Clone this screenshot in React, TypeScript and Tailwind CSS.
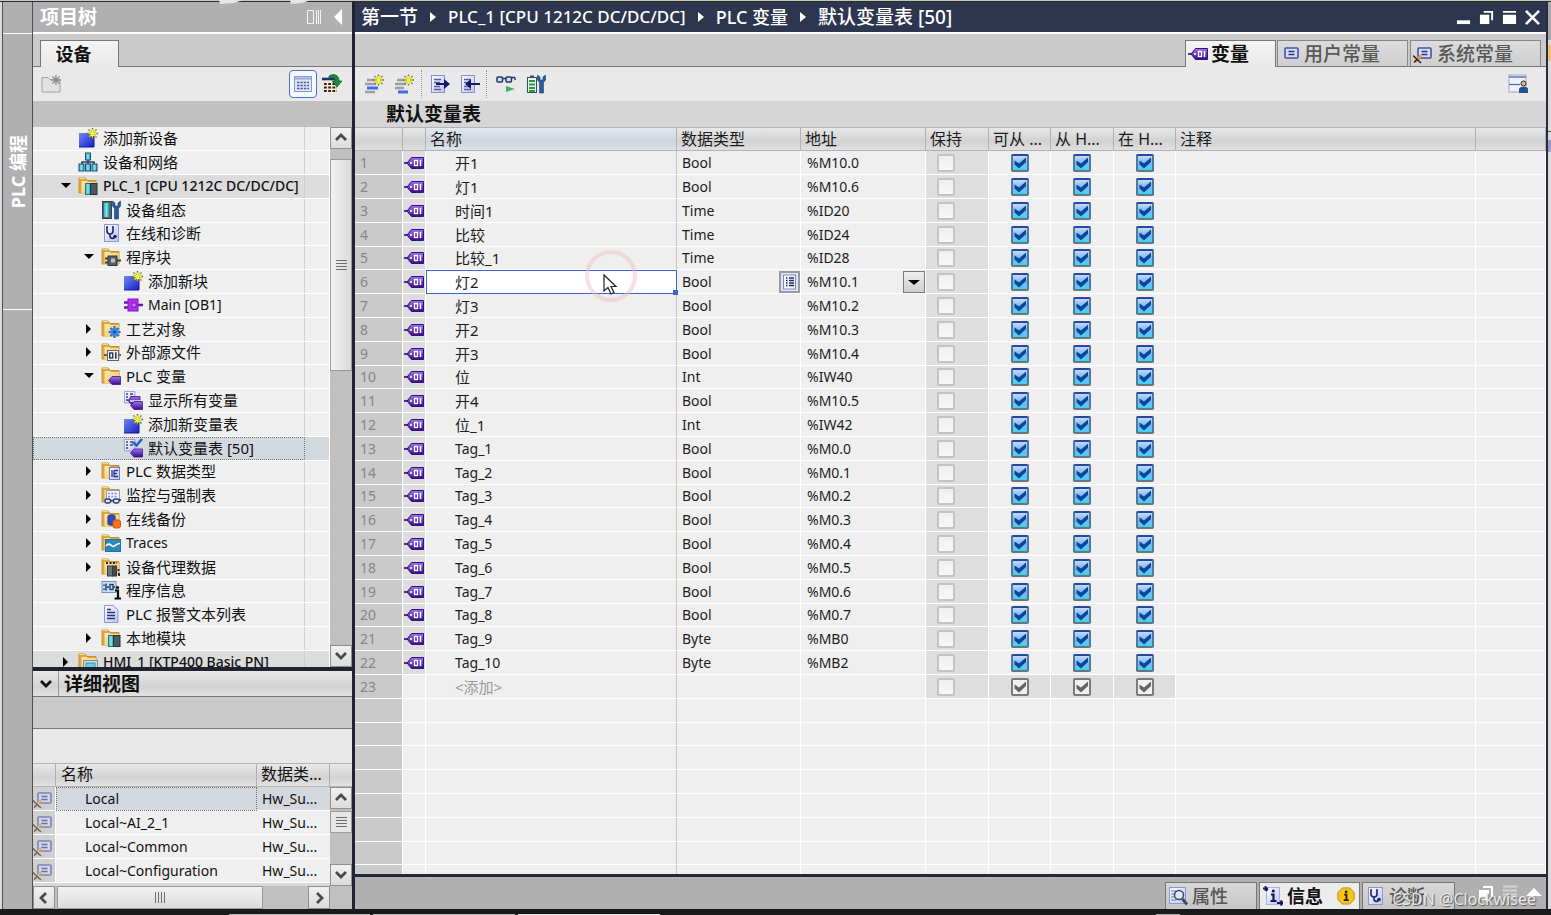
import { useState } from 'react';
import type { ReactNode } from 'react';
import { clsx } from 'clsx';

type IconName =
  | 'addNew'
  | 'network'
  | 'plcFolder'
  | 'deviceConfig'
  | 'diagnose'
  | 'blocks'
  | 'mainBlock'
  | 'techFolder'
  | 'sourceFolder'
  | 'tagFolder'
  | 'allTags'
  | 'tagTable'
  | 'typeFolder'
  | 'watchFolder'
  | 'backupFolder'
  | 'traceFolder'
  | 'proxyFolder'
  | 'programInfo'
  | 'textList'
  | 'localFolder'
  | 'hmiFolder';

interface TreeItem {
  label: string;
  icon: IconName;
  level: 0 | 1 | 2;
  arrow?: 'open' | 'closed';
  device?: boolean;
}

const TREE: TreeItem[] = [
  { label: '添加新设备', icon: 'addNew', level: 0 },
  { label: '设备和网络', icon: 'network', level: 0 },
  { label: 'PLC_1 [CPU 1212C DC/DC/DC]', icon: 'plcFolder', level: 0, arrow: 'open', device: true },
  { label: '设备组态', icon: 'deviceConfig', level: 1 },
  { label: '在线和诊断', icon: 'diagnose', level: 1 },
  { label: '程序块', icon: 'blocks', level: 1, arrow: 'open' },
  { label: '添加新块', icon: 'addNew', level: 2 },
  { label: 'Main [OB1]', icon: 'mainBlock', level: 2 },
  { label: '工艺对象', icon: 'techFolder', level: 1, arrow: 'closed' },
  { label: '外部源文件', icon: 'sourceFolder', level: 1, arrow: 'closed' },
  { label: 'PLC 变量', icon: 'tagFolder', level: 1, arrow: 'open' },
  { label: '显示所有变量', icon: 'allTags', level: 2 },
  { label: '添加新变量表', icon: 'addNew', level: 2 },
  { label: '默认变量表 [50]', icon: 'tagTable', level: 2 },
  { label: 'PLC 数据类型', icon: 'typeFolder', level: 1, arrow: 'closed' },
  { label: '监控与强制表', icon: 'watchFolder', level: 1, arrow: 'closed' },
  { label: '在线备份', icon: 'backupFolder', level: 1, arrow: 'closed' },
  { label: 'Traces', icon: 'traceFolder', level: 1, arrow: 'closed' },
  { label: '设备代理数据', icon: 'proxyFolder', level: 1, arrow: 'closed' },
  { label: '程序信息', icon: 'programInfo', level: 1 },
  { label: 'PLC 报警文本列表', icon: 'textList', level: 1 },
  { label: '本地模块', icon: 'localFolder', level: 1, arrow: 'closed' },
  { label: 'HMI_1 [KTP400 Basic PN]', icon: 'hmiFolder', level: 0, arrow: 'closed', device: true },
];

const SELECTED_TREE_ITEM = 13;
const ACTIVE_TAG = 5;
const EMPTY_ROWS = 8;

const TAGS: [name: string, type: string, address: string][] = [
  ['开1', 'Bool', '%M10.0'],
  ['灯1', 'Bool', '%M10.6'],
  ['时间1', 'Time', '%ID20'],
  ['比较', 'Time', '%ID24'],
  ['比较_1', 'Time', '%ID28'],
  ['灯2', 'Bool', '%M10.1'],
  ['灯3', 'Bool', '%M10.2'],
  ['开2', 'Bool', '%M10.3'],
  ['开3', 'Bool', '%M10.4'],
  ['位', 'Int', '%IW40'],
  ['开4', 'Bool', '%M10.5'],
  ['位_1', 'Int', '%IW42'],
  ['Tag_1', 'Bool', '%M0.0'],
  ['Tag_2', 'Bool', '%M0.1'],
  ['Tag_3', 'Bool', '%M0.2'],
  ['Tag_4', 'Bool', '%M0.3'],
  ['Tag_5', 'Bool', '%M0.4'],
  ['Tag_6', 'Bool', '%M0.5'],
  ['Tag_7', 'Bool', '%M0.6'],
  ['Tag_8', 'Bool', '%M0.7'],
  ['Tag_9', 'Byte', '%MB0'],
  ['Tag_10', 'Byte', '%MB2'],
];

const ACCESS_COLUMNS = ['可从 ...', '从 H...', '在 H...'];

const DETAILS = ['Local', 'Local~AI_2_1', 'Local~Common', 'Local~Configuration'];

const HEADER_FILL = 'bg-linear-to-b from-[#e9e9e9] via-[#d2d2d2] via-60% to-[#e2e2e2]';

// Chinese labels are set one pixel larger than plain Latin ones.
function textSize(text: string) {
  return /[\u4e00-\u9fff]/.test(text) ? 'text-[15px]' : 'text-sm';
}

function Svg({ children, className = 'size-5', box = '0 0 20 20' }: { children: ReactNode; className?: string; box?: string }) {
  return (
    <svg viewBox={box} className={clsx('block shrink-0', className)} fill="none" aria-hidden="true">
      {children}
    </svg>
  );
}

function SharedDefs() {
  return (
    <svg className="absolute size-0" aria-hidden="true">
      <defs>
        <linearGradient id="purple" x1="0" y1="0" x2="0" y2="1">
          <stop offset="0" stopColor="#9a7be6" />
          <stop offset="0.5" stopColor="#6a3cc4" />
          <stop offset="1" stopColor="#35107f" />
        </linearGradient>
        <linearGradient id="blue" x1="0" y1="0" x2="1" y2="1">
          <stop offset="0" stopColor="#6f86f6" />
          <stop offset="1" stopColor="#1620c0" />
        </linearGradient>
        <linearGradient id="folder" x1="0" y1="0" x2="1" y2="1">
          <stop offset="0" stopColor="#fdeab2" />
          <stop offset="1" stopColor="#f2c25c" />
        </linearGradient>
        <linearGradient id="paper" x1="0" y1="0" x2="1" y2="1">
          <stop offset="0" stopColor="#fdfdff" />
          <stop offset="1" stopColor="#bcc4ee" />
        </linearGradient>
        <linearGradient id="cyan" x1="0" y1="0" x2="1" y2="0">
          <stop offset="0" stopColor="#2fb4cc" />
          <stop offset="0.5" stopColor="#7fe6f0" />
          <stop offset="1" stopColor="#2799b4" />
        </linearGradient>
      </defs>
    </svg>
  );
}

function Spark({ x, y }: { x: number; y: number }) {
  return (
    <g transform={`translate(${x} ${y})`}>
      <path d="M0-5.500V5.500M-5.500 0H5.500M-4-4 4 4M4-4-4 4" stroke="#6d7a24" strokeWidth="1.400" />
      <path d="M0-4V4M-4 0H4M-3-3 3 3M3-3-3 3" stroke="#f4f53c" strokeWidth="1.200" />
    </g>
  );
}

function FolderShape() {
  return (
    <g>
      <path d="M1 17V2H7L9 4.500H18V17Z" fill="#dfa640" stroke="#c39232" />
      <path d="M3.500 17.500V5H8.500L10 6H18V17.500Z" fill="url(#folder)" />
      <path d="M1.500 2.500H7" stroke="#f7d98c" />
    </g>
  );
}

function Wrench({ x = 12 }: { x?: number }) {
  return (
    <path
      transform={`translate(${x} 1)`}
      d="M0 0V5L2 7.500V18H6V7.500L8 5V0L5.500 2V5H2.500V2Z"
      fill="#2a5b9d"
      stroke="#173e78"
      strokeWidth="0.6"
    />
  );
}

function SmallTag({ x, y }: { x: number; y: number }) {
  return (
    <path
      transform={`translate(${x} ${y})`}
      d="M0 4 3.500 0H12V8H3.500Z"
      fill="url(#purple)"
      stroke="#3a1684"
      strokeWidth="0.8"
    />
  );
}

function Stethoscope() {
  return (
    <g>
      <rect x="3.500" y="1.500" width="14" height="17" fill="url(#paper)" stroke="#8b97d4" />
      <path d="M7 4H6V8C6 12 12 12 12 8V4H11M9 11V13C9 16 13 16 13.500 14" stroke="#1b2668" strokeWidth="1.600" />
      <circle cx="14" cy="13.500" r="1.800" fill="#1b2668" />
    </g>
  );
}

function Sheet() {
  return (
    <g>
      <path d="M1.500 1.500H12V13H1.500Z" fill="url(#paper)" stroke="#9aa5d8" />
      <path d="M3 4H5M7 4H10M3 7H5M7 7H10M3 10H5" stroke="#38427e" strokeWidth="1.400" />
    </g>
  );
}

function TreeIcon({ name }: { name: IconName }) {
  switch (name) {
    case 'addNew':
      return (
        <Svg>
          <rect x="1" y="5" width="15" height="14" fill="url(#blue)" />
          <path d="M1 19H16V5" stroke="#1218a0" />
          <Spark x={14.5} y={5.5} />
        </Svg>
      );
    case 'network':
      return (
        <Svg>
          <path d="M10 7V10M4 13V10H16V13M10 10V13" stroke="#1f3f66" strokeWidth="1.500" />
          <rect x="7.500" y="1" width="5" height="7" fill="url(#cyan)" stroke="#1f4a70" />
          <rect x="1" y="12" width="5" height="7" fill="url(#cyan)" stroke="#1f4a70" />
          <rect x="7.500" y="12" width="5" height="7" fill="url(#cyan)" stroke="#1f4a70" />
          <rect x="14" y="12" width="5" height="7" fill="url(#cyan)" stroke="#1f4a70" />
        </Svg>
      );
    case 'plcFolder':
    case 'localFolder':
      return (
        <Svg>
          <FolderShape />
          <rect x="7.500" y="7.500" width="5" height="11" fill="url(#cyan)" stroke="#2c6f86" />
          <rect x="12.500" y="7.500" width="6.500" height="11" fill="#4b5960" stroke="#2b343b" />
        </Svg>
      );
    case 'deviceConfig':
      return (
        <Svg>
          <rect x="1.500" y="1.500" width="9" height="17" fill="#56646c" stroke="#36444c" />
          <rect x="3" y="3" width="5" height="14" fill="url(#cyan)" />
          <Wrench x={11.5} />
        </Svg>
      );
    case 'diagnose':
      return (
        <Svg>
          <Stethoscope />
        </Svg>
      );
    case 'blocks':
      return (
        <Svg>
          <FolderShape />
          <path d="M4 11.500H7M4 15.500H7M16 13.500H20" stroke="#3d464c" strokeWidth="2" />
          <rect x="7" y="9" width="9" height="9.500" fill="#545f66" stroke="#2f383d" />
          <rect x="10" y="11.500" width="4" height="4" fill="#b8c0c4" />
        </Svg>
      );
    case 'mainBlock':
      return (
        <Svg>
          <path d="M1 7.500H6M1 12.500H6M14 10H20" stroke="#6a1aa8" strokeWidth="2.400" />
          <rect x="5" y="4" width="10" height="12" fill="#b32ff0" stroke="#7a18b8" />
          <rect x="9" y="8" width="4" height="4" fill="#d77cff" stroke="#7a18b8" />
        </Svg>
      );
    case 'techFolder':
      return (
        <Svg>
          <FolderShape />
          <path d="M13.500 7V19M7.500 13H19.500M9.500 9 17.500 17M17.500 9 9.500 17" stroke="#2a6bd0" strokeWidth="2.200" />
          <circle cx="13.500" cy="13" r="4" fill="#3f86e6" />
          <circle cx="13.500" cy="13" r="1.500" fill="#17479c" />
        </Svg>
      );
    case 'sourceFolder':
      return (
        <Svg>
          <FolderShape />
          <path d="M3 13H20" stroke="#59636c" strokeWidth="2" />
          <rect x="6.500" y="8.500" width="11" height="10" fill="#eef1fb" stroke="#5b6570" />
          <rect x="8.700" y="11" width="3" height="5" stroke="#20284a" strokeWidth="1.300" />
          <path d="M14.800 10.300V16.700" stroke="#20284a" strokeWidth="1.500" />
        </Svg>
      );
    case 'tagFolder':
      return (
        <Svg>
          <FolderShape />
          <SmallTag x={7.5} y={10.5} />
        </Svg>
      );
    case 'allTags':
      return (
        <Svg>
          <Sheet />
          <SmallTag x={5} y={6.5} />
          <path d="M7 11H19" stroke="#f2eefb" strokeWidth="1.500" />
          <SmallTag x={7.5} y={11.5} />
        </Svg>
      );
    case 'tagTable':
      return (
        <Svg>
          <Sheet />
          <path d="M10 4 13.500 7.500 19 1" stroke="#2a5cc4" strokeWidth="2.500" />
          <SmallTag x={7.5} y={11} />
        </Svg>
      );
    case 'typeFolder':
      return (
        <Svg>
          <FolderShape />
          <rect x="8.500" y="6.500" width="10" height="12" fill="url(#paper)" stroke="#6c7bc4" />
          <path d="M11 9V16M13 9.500H17M13 9.500V15.500H17M13 12.500H16" stroke="#26358c" strokeWidth="1.300" />
        </Svg>
      );
    case 'watchFolder':
      return (
        <Svg>
          <FolderShape />
          <rect x="5.500" y="5.500" width="13" height="10" fill="#f3f5ff" stroke="#8e9ad2" />
          <path d="M7 8.500H17M7 11.500H17" stroke="#8490c8" strokeWidth="1.500" strokeDasharray="2 1.300" />
          <rect x="4" y="14" width="5.500" height="4" rx="1.500" fill="#dfe6ff" stroke="#27357f" strokeWidth="1.300" />
          <rect x="12.500" y="14" width="5.500" height="4" rx="1.500" fill="#dfe6ff" stroke="#27357f" strokeWidth="1.300" />
          <path d="M9.500 15.500H12.500M18 15H20" stroke="#27357f" strokeWidth="1.300" />
        </Svg>
      );
    case 'backupFolder':
      return (
        <Svg>
          <FolderShape />
          <path d="M7 7C7 5.500 14 5.500 14 7V15C14 16.500 7 16.500 7 15Z" fill="#2b49c6" stroke="#1b2f93" />
          <rect x="12" y="11" width="7.500" height="8" rx="2" fill="#f4731f" stroke="#d4560c" />
        </Svg>
      );
    case 'traceFolder':
      return (
        <Svg>
          <FolderShape />
          <rect x="4.500" y="6.500" width="15" height="12" fill="#2f87b8" stroke="#22709d" />
          <path d="M5 13C7 10 9 11 11 13S15 10 19 10.500" stroke="#f4fbff" strokeWidth="1.600" />
        </Svg>
      );
    case 'proxyFolder':
      return (
        <Svg>
          <FolderShape />
          <path d="M5 6H16" stroke="#1f2327" strokeWidth="2" strokeDasharray="2 1.500" />
          <rect x="6.500" y="9" width="5" height="10" fill="#6c757c" stroke="#33393d" />
          <rect x="11.500" y="9" width="4" height="10" fill="#434b51" stroke="#33393d" />
          <path d="M17.500 12V14M18 16V19" stroke="#222" strokeWidth="1.800" />
        </Svg>
      );
    case 'programInfo':
      return (
        <Svg>
          <rect x="1" y="1.500" width="14" height="11" fill="#c4dcf2" stroke="#6b96bf" />
          <path d="M3 4.500V6M3 8.500V10M6 7H8M12 7H14M5 3.500V10.500" stroke="#173a63" strokeWidth="1.400" />
          <rect x="9" y="4.500" width="3" height="5" stroke="#173a63" strokeWidth="1.300" />
          <path d="M14 10.500H17V18.500M13.500 18.500H20" stroke="#0b0b0b" strokeWidth="2.200" />
          <circle cx="16.500" cy="7.500" r="1.600" fill="#0b0b0b" />
        </Svg>
      );
    case 'textList':
      return (
        <Svg>
          <path d="M3.500 1.500H12L17 6V18.500H3.500Z" fill="url(#paper)" stroke="#8c98d0" />
          <path d="M6 5.500H10M6 8.500H14M6 11.500H14M6 14.500H14" stroke="#2a3678" strokeWidth="1.500" />
        </Svg>
      );
    case 'hmiFolder':
      return (
        <Svg>
          <FolderShape />
          <rect x="5.500" y="8.500" width="14" height="11" fill="#d2d8db" stroke="#7f8a90" />
          <rect x="8" y="11" width="9" height="7" fill="#5fcfe4" stroke="#3795ac" />
        </Svg>
      );
  }
}

function TagIcon() {
  return (
    <Svg box="0 0 20 14" className="h-[14px] w-5">
      <path d="M0 7H5" stroke="#3a2a6a" strokeWidth="1.800" />
      <path d="M3 7 7.500 1.500H19.500V12.500H7.500Z" fill="url(#purple)" stroke="#34107c" />
      <rect x="10.500" y="4.500" width="3" height="5" stroke="#fff" strokeWidth="1.300" />
      <path d="M16.500 4V10" stroke="#fff" strokeWidth="1.500" />
      <circle cx="7" cy="7" r="1.200" fill="#e6dcff" />
    </Svg>
  );
}

function ConstantIcon({ faded = false, pen = false }: { faded?: boolean; pen?: boolean }) {
  return (
    <Svg className={clsx('size-5', faded && 'opacity-60')}>
      <rect x="5" y="4" width="13" height="10" rx="1" fill="#d5dcf8" stroke="#4454a4" strokeWidth="1.600" />
      <path d="M8.500 7.500H14.500M8.500 10.500H14.500" stroke="#28347c" strokeWidth="1.400" />
      {pen && (
        <>
          <path d="M2 18 8 11.500" stroke="#e49a2c" strokeWidth="3" />
          <path d="M0 11.500 8 19M1 18.500 3.500 16" stroke="#1c1c1c" strokeWidth="1.300" />
        </>
      )}
    </Svg>
  );
}

function InsertRowIcon({ below = false }: { below?: boolean }) {
  return (
    <Svg>
      <path d={below ? 'M3 6H11M1 10H12M1 14H10' : 'M3 6H11M1 10H12M1 18H11'} stroke="#9c9fa3" strokeWidth="2.600" />
      <path d={below ? 'M4 18H14' : 'M3 14H14'} stroke="#3f6fe4" strokeWidth="3" />
      <Spark x={14.5} y={6} />
    </Svg>
  );
}

function TransferIcon({ into = false }: { into?: boolean }) {
  return (
    <Svg>
      <rect x="1.500" y="1.500" width="13" height="17" fill="url(#paper)" stroke="#8390cc" />
      <path d="M4 5.500H11M4 8.500H10M4 12.500H10M4 15.500H11" stroke="#5361a4" strokeWidth="1.300" />
      <path
        d={into ? 'M20 9H11V5L5 10 11 15V11H20Z' : 'M6 9H14V5L20 10 14 15V11H6Z'}
        fill="#15186a"
      />
    </Svg>
  );
}

function ScrollButton({ dir, label, className }: { dir: 'up' | 'down' | 'left' | 'right'; label: string; className?: string }) {
  const paths = { up: 'M3 10 8 5 13 10', down: 'M3 5 8 10 13 5', left: 'M10 3 5 8 10 13', right: 'M6 3 11 8 6 13' };
  return (
    <button
      type="button"
      aria-label={label}
      className={clsx(
        'grid shrink-0 place-items-center border border-[#8f8f8f] bg-linear-to-b from-[#f1f1f1] to-[#dcdcdc]',
        className ?? 'h-[22px] w-full',
      )}
    >
      <Svg box="0 0 16 16" className="size-4">
        <path d={paths[dir]} stroke="#4a4a4a" strokeWidth="2.800" />
      </Svg>
    </button>
  );
}

function Grip() {
  return (
    <span className="flex h-[10px] w-[11px] flex-col justify-between">
      {[0, 1, 2, 3].map((line) => (
        <span key={line} className="h-px bg-[#6d6d6d]" />
      ))}
    </span>
  );
}

function CheckBox({ label, state }: { label: string; state: 'on' | 'off' | 'preset' }) {
  const [checked, setChecked] = useState(state !== 'off');
  return (
    <label className="inline-grid size-[18px] align-middle">
      <input
        type="checkbox"
        aria-label={label}
        checked={checked}
        disabled={state !== 'on'}
        onChange={(e) => setChecked(e.target.checked)}
        className={clsx(
          'col-start-1 row-start-1 size-[18px] appearance-none rounded-[2px] border-2',
          state === 'on' && 'border-x-[#4f7a9c] border-t-[#25479c] border-b-[#68777c] bg-linear-to-b from-[#c3dafc] via-[#7cb8f4] to-[#36d3f3]',
          state === 'off' && 'border-[#c3c3c3] bg-linear-to-b from-[#efefef] to-[#f8f8f8]',
          state === 'preset' && 'border-[#7b7b7b] bg-[#f0f0f0]',
        )}
      />
      {checked && (
        <Svg box="0 0 18 18" className="pointer-events-none col-start-1 row-start-1 size-[18px]">
          <path d="M3.500 6.500 8 9.500 15 3.500V8L8 14.500 3.500 10.500Z" fill={state === 'on' ? '#0c469c' : '#646464'} />
        </Svg>
      )}
    </label>
  );
}

function SideStrip() {
  return (
    <div className="flex w-[31px] shrink-0 flex-col border-x border-[#4c4f55] bg-[#b0b0b0]">
      <div className="h-8 border-b border-white" />
      <div className="flex h-[276px] items-center justify-center border-b border-white">
        <span className="rotate-180 text-lg leading-6 font-bold text-white [text-orientation:sideways] [writing-mode:vertical-rl]">
          PLC 编程
        </span>
      </div>
    </div>
  );
}

function ProjectTree() {
  const [selected, setSelected] = useState(SELECTED_TREE_ITEM);
  return (
    <div className="flex min-h-0 flex-1">
      <ul role="tree" aria-label="项目树" className="min-w-0 flex-1 overflow-hidden">
        {TREE.map((item, i) => (
          <li
            key={item.label}
            role="treeitem"
            aria-selected={selected === i}
            onClick={() => setSelected(i)}
            className={clsx(
              'flex h-6 border-b border-white nth-[5n]:h-[23px]',
              selected === i ? 'bg-[#d3d8de]' : item.device ? 'bg-[#dcdcdc]' : 'bg-[#efefef]',
            )}
          >
            <div
              className={clsx(
                'flex min-w-0 flex-1 items-center border-r border-[#d0d0d0] pb-0.5',
                selected === i && 'outline outline-1 -outline-offset-1 outline-dotted outline-[#777]',
                item.level === 0 && 'pl-[27px]',
                item.level === 1 && 'pl-[50px]',
                item.level === 2 && 'pl-[72px]',
              )}
            >
              <span className="flex w-[18px] shrink-0">
                {item.arrow && (
                  <button type="button" aria-label={item.arrow === 'open' ? '折叠' : '展开'}>
                    <Svg box="0 0 12 12" className="size-3">
                      <path d={item.arrow === 'open' ? 'M1 3H11L6 8Z' : 'M3 1V11L8 6Z'} fill="#000" />
                    </Svg>
                  </button>
                )}
              </span>
              <TreeIcon name={item.icon} />
              <span
                className={clsx(
                  'ml-[5px] leading-5 whitespace-nowrap',
                  textSize(item.label),
                  item.device ? 'font-medium' : 'font-normal',
                )}
              >
                {item.label}
              </span>
            </div>
            <div className="w-6" />
          </li>
        ))}
      </ul>
      <div className="flex w-[23px] flex-col border-l border-white bg-[#c0c0c0]">
        <ScrollButton dir="up" label="向上滚动" />
        <div className="mt-[10px] grid h-[212px] place-items-center border border-[#9a9a9a] bg-linear-to-r from-[#f2f2f2] to-[#dadada]">
          <Grip />
        </div>
        <ScrollButton dir="down" label="向下滚动" className="mt-auto h-[22px] w-full" />
      </div>
    </div>
  );
}

function DetailView() {
  return (
    <section className="flex h-[238px] shrink-0 flex-col">
      <div className={clsx('flex h-[26px] shrink-0 items-center border-b border-[#777]', HEADER_FILL)}>
        <button type="button" aria-label="折叠详细视图" className="grid h-full w-[26px] place-items-center border-r border-[#999]">
          <Svg box="0 0 16 16" className="size-4">
            <path d="M3 5 8 10 13 5" stroke="#111" strokeWidth="2.800" />
          </Svg>
        </button>
        <h2 className="ml-[5px] text-[19px] leading-6 font-bold">详细视图</h2>
      </div>
      <div className="h-8 shrink-0 border-b border-[#777] bg-[#cacaca]" />
      <div className="h-[34px] shrink-0 bg-[#e9e9e9]" />
      <div className={clsx('flex h-6 shrink-0 border-y border-[#b4b4b4] text-base leading-5', HEADER_FILL)}>
        <span className="w-[23px] border-r border-[#b0b0b0]" />
        <span className="flex-1 border-r border-[#b0b0b0] pl-[5px]">名称</span>
        <span className="w-[73px] border-r border-[#b0b0b0] pl-1 whitespace-nowrap">数据类...</span>
        <span className="w-[22px]" />
      </div>
      <div className="flex min-h-0 flex-1">
        <div className="min-w-0 flex-1 overflow-hidden">
          <table className="w-full table-fixed border-separate border-spacing-0 text-sm">
            <colgroup>
              <col className="w-[23px]" />
              <col />
              <col className="w-[73px]" />
            </colgroup>
            <tbody>
              {DETAILS.map((name, i) => (
                <tr key={name} className={clsx('h-6', i === 0 ? 'bg-[#d3d8de]' : 'bg-[#efefef]')}>
                  <td className="border-r border-b border-white bg-[#cfcfcf] p-0">
                    <ConstantIcon faded pen />
                  </td>
                  <td
                    className={clsx(
                      'border-b border-white p-0 pl-[29px] leading-5',
                      i === 0 && 'outline outline-1 -outline-offset-1 outline-dotted outline-[#777]',
                    )}
                  >
                    {name}
                  </td>
                  <td className="border-b border-white p-0 pl-[5px] leading-5">Hw_Su...</td>
                </tr>
              ))}
            </tbody>
          </table>
        </div>
        <div className="flex w-[22px] flex-col bg-[#c0c0c0]">
          <ScrollButton dir="up" label="向上滚动" />
          <div className="mt-0.5 grid h-[22px] place-items-center border border-[#9a9a9a] bg-[#e6e6e6]">
            <Grip />
          </div>
          <ScrollButton dir="down" label="向下滚动" className="mt-auto h-[22px] w-full" />
        </div>
      </div>
      <div className="flex h-[23px] shrink-0 bg-[#c0c0c0]">
        <ScrollButton dir="left" label="向左滚动" className="h-full w-[22px]" />
        <div className="ml-0.5 grid w-[206px] place-items-center border border-[#9a9a9a] bg-linear-to-b from-[#f2f2f2] to-[#dcdcdc]">
          <span className="flex h-[11px] w-[10px] justify-between">
            {[0, 1, 2, 3].map((line) => (
              <span key={line} className="w-px bg-[#6d6d6d]" />
            ))}
          </span>
        </div>
        <ScrollButton dir="right" label="向右滚动" className="mr-[22px] ml-auto h-full w-[22px]" />
      </div>
    </section>
  );
}

function LeftPanel() {
  return (
    <aside className="flex w-[319px] shrink-0 flex-col">
      <header className="flex h-[30px] shrink-0 items-center bg-[#b0b0b0] pr-[9px] pl-[7px]">
        <h1 className="text-[19px] leading-6 font-bold text-white">项目树</h1>
        <button type="button" aria-label="列" className="ml-auto">
          <Svg box="0 0 14 14" className="size-[14px]">
            <path d="M0.500 0.500H6.500V13.500H0.500ZM9.500 0V14M11.500 0V14M13.500 0V14" stroke="#f4f4f4" />
          </Svg>
        </button>
        <button type="button" aria-label="折叠" className="ml-3">
          <Svg box="0 0 10 16" className="h-4 w-[10px]">
            <path d="M9 0V16L1 8Z" fill="#fff" />
          </Svg>
        </button>
      </header>
      <div className="flex h-[35px] shrink-0 items-end border-t-2 border-white bg-[#cacaca]">
        <span className="h-px w-[7px] bg-[#777]" />
        <button
          type="button"
          className="h-[27px] w-[79px] border border-b-0 border-[#777] bg-linear-to-b from-[#f4f4f4] to-[#e9e9e9] pr-3 text-lg leading-6 font-bold"
        >
          设备
        </button>
        <span className="h-px flex-1 bg-[#777]" />
      </div>
      <div className="flex h-[34px] shrink-0 items-center bg-[#e9e9e9] pr-[10px] pl-2">
        <button type="button" aria-label="新建组" disabled>
          <Svg>
            <path d="M1 18V3.500H7L9 5.500H19V18Z" fill="#e2e2e2" stroke="#a0a0a0" />
            <path d="M15 1V11M10 6H20M11.500 2.500 18.500 9.500M18.500 2.500 11.500 9.500" stroke="#8d8d8d" strokeWidth="1.300" />
          </Svg>
        </button>
        <button
          type="button"
          aria-label="显示列表"
          className="ml-auto grid size-7 place-items-center rounded-sm border border-[#4b73c8] bg-[#f5f8ff]"
        >
          <Svg>
            <rect x="1.500" y="2.500" width="17" height="15" fill="#dfe5fa" stroke="#8b98cf" />
            <path d="M2 4.500H18" stroke="#98a6dc" strokeWidth="2" />
            <path d="M4 8.500H16M4 11.500H16M4 14.500H16" stroke="#4d5ca0" strokeWidth="1.400" strokeDasharray="2.400 1" />
          </Svg>
        </button>
        <button type="button" aria-label="导出" className="ml-[5px]">
          <Svg>
            <rect x="1" y="4" width="15" height="15" fill="#f6ead4" />
            <path d="M0 5H15" stroke="#1e3078" strokeWidth="2.600" />
            <path d="M2 10H15M2 13.500H15M2 17H15" stroke="#33251d" strokeWidth="2.200" strokeDasharray="2.800 1.400" />
            <path d="M7 2C12-1 17 1 17 7H20L15 13 10 7H13C13 4 11 3 7 4Z" fill="#1f8a3c" stroke="#0e5c22" strokeWidth="0.700" />
          </Svg>
        </button>
      </div>
      <div className="h-[26px] shrink-0 bg-[#c1c1c1]" />
      <ProjectTree />
      <div className="h-1 shrink-0 bg-[#20232f]" />
      <DetailView />
    </aside>
  );
}

function TitleBar() {
  const crumbs = [
    { text: '第一节', size: 'text-[19px]' },
    { text: 'PLC_1 [CPU 1212C DC/DC/DC]', size: 'text-[17px]' },
    { text: 'PLC 变量', size: 'text-lg' },
    { text: '默认变量表 [50]', size: 'text-[19px]' },
  ];
  return (
    <header className="flex h-[30px] shrink-0 items-center bg-[#2d354f] pr-[6px] pl-[6px] text-white">
      <nav aria-label="路径" className="flex items-center">
        {crumbs.map(({ text, size }, i) => (
          <span key={text} className="flex items-center">
            {i > 0 && (
              <Svg box="0 0 6 10" className="mx-3 h-[10px] w-[6px]">
                <path d="M0 0V10L6 5Z" fill="#fff" />
              </Svg>
            )}
            <a href="#" className={clsx('font-medium whitespace-nowrap', size, 'leading-6')}>
              {text}
            </a>
          </span>
        ))}
      </nav>
      <div className="ml-auto flex items-center gap-2">
        <button type="button" aria-label="最小化">
          <Svg box="0 0 16 16" className="size-[15px]">
            <path d="M1 13H15" stroke="#fff" strokeWidth="4" />
          </Svg>
        </button>
        <button type="button" aria-label="浮动">
          <Svg box="0 0 16 16" className="size-[15px]">
            <path d="M1 5H11V15H1Z" fill="#fff" />
            <path d="M5 2H14V11" stroke="#fff" strokeWidth="2" />
          </Svg>
        </button>
        <button type="button" aria-label="最大化">
          <Svg box="0 0 16 16" className="size-[15px]">
            <path d="M1 1H15V3H1ZM1 5H15V15H1Z" fill="#fff" />
          </Svg>
        </button>
        <button type="button" aria-label="关闭">
          <Svg box="0 0 16 16" className="size-[15px]">
            <path d="M1 1 15 15M15 1 1 15" stroke="#fff" strokeWidth="2.800" />
          </Svg>
        </button>
      </div>
    </header>
  );
}

function EditorTabs() {
  const inactive =
    'flex h-[27px] w-[131px] items-center border border-b-[#777] border-[#888] bg-linear-to-b from-[#dcdcdc] to-[#cfcfcf] text-[19px] leading-6 font-medium text-[#585858]';
  return (
    <div className="flex h-[35px] shrink-0 items-end border-t-2 border-white bg-[#cacaca]">
      <span className="h-px flex-1 bg-[#777]" />
      <button
        type="button"
        className="flex h-[27px] w-[91px] items-center gap-[3px] border border-b-0 border-[#777] bg-linear-to-b from-[#f4f4f4] to-[#e9e9e9] pl-[2px] text-[19px] leading-6 font-bold"
      >
        <TagIcon />
        变量
      </button>
      <span className="h-px w-px bg-[#777]" />
      <button type="button" className={clsx(inactive, 'gap-1 pl-[2px]')}>
        <ConstantIcon />
        用户常量
      </button>
      <span className="h-px w-0.5 bg-[#777]" />
      <button type="button" className={clsx(inactive, 'gap-1 pl-[2px]')}>
        <ConstantIcon pen />
        系统常量
      </button>
      <span className="h-px w-[5px] bg-[#777]" />
    </div>
  );
}

function EditorToolbar() {
  return (
    <div className="flex h-[34px] shrink-0 items-center bg-[#e9e9e9] pr-[18px] pl-[9px]">
      <div className="flex gap-[10px] border-r border-dotted border-[#999] py-1 pr-[7px]">
        <button type="button" aria-label="插入行">
          <InsertRowIcon />
        </button>
        <button type="button" aria-label="添加行">
          <InsertRowIcon below />
        </button>
      </div>
      <div className="flex gap-[10px] border-r border-dotted border-[#999] py-1 pr-[6px] pl-2">
        <button type="button" aria-label="导出">
          <TransferIcon />
        </button>
        <button type="button" aria-label="导入">
          <TransferIcon into />
        </button>
      </div>
      <div className="flex gap-[10px] pl-[9px]">
        <button type="button" aria-label="全部监视">
          <Svg>
            <rect x="1" y="3" width="5.500" height="5" rx="1" fill="#cfe0f4" stroke="#22346e" strokeWidth="1.500" />
            <rect x="10" y="3" width="5.500" height="5" rx="1" fill="#cfe0f4" stroke="#22346e" strokeWidth="1.500" />
            <path d="M6.500 4.500H10M15.500 3.500H18.500L19.500 6" stroke="#22346e" strokeWidth="1.500" />
            <path d="M10 12V18L19 15Z" fill="#35b369" />
          </Svg>
        </button>
        <button type="button" aria-label="保持性设置">
          <Svg>
            <rect x="1.500" y="3.500" width="9" height="15" fill="#e8f4ec" stroke="#34506e" />
            <path d="M4 2.500H8" stroke="#34506e" strokeWidth="2" />
            <path d="M3 7H9M3 10.500H9M3 14H9M3 17H9" stroke="#2c9a45" strokeWidth="2" />
            <Wrench x={11.5} />
          </Svg>
        </button>
      </div>
      <button type="button" aria-label="用户视图" className="ml-auto">
        <Svg>
          <rect x="1" y="1" width="17" height="17" fill="#eef1fc" stroke="#9ba6d4" />
          <path d="M1 3H18" stroke="#8592cc" strokeWidth="2" />
          <path d="M1 10.500H12" stroke="#56659c" strokeWidth="1.200" />
          <circle cx="15.500" cy="9.500" r="2.500" fill="#e2b98a" stroke="#2a2320" />
          <path d="M11 19V14.500C12 12 19 12 20 14.500V19Z" fill="#20548e" />
        </Svg>
      </button>
    </div>
  );
}

function TagTable() {
  const head = 'border-r border-y border-[#b0b3b8] p-0 pl-1 text-left text-base leading-5 font-normal whitespace-nowrap';
  const cell = 'border-r border-b border-white p-0';
  return (
    <div className="min-h-0 flex-1 overflow-hidden bg-[#efefef]">
      <table className="w-full table-fixed border-separate border-spacing-0 text-sm text-[#1c1c1c]">
        <colgroup>
          <col className="w-12" />
          <col className="w-[23px]" />
          <col className="w-[251px]" />
          <col className="w-[124px]" />
          <col className="w-[125px]" />
          <col className="w-[63px]" />
          <col className="w-[62px]" />
          <col className="w-[63px]" />
          <col className="w-[62px]" />
          <col className="w-[300px]" />
          <col />
        </colgroup>
        <thead>
          <tr className={clsx('h-6', HEADER_FILL)}>
            <th className={head} />
            <th className={head} />
            <th className={clsx(head, 'bg-linear-to-b from-[#e4e9f0] via-[#cdd4de] via-60% to-[#dde3ea]')}>名称</th>
            <th className={head}>数据类型</th>
            <th className={head}>地址</th>
            <th className={head}>保持</th>
            {ACCESS_COLUMNS.map((title) => (
              <th key={title} className={head}>
                {title}
              </th>
            ))}
            <th className={head}>注释</th>
            <th className={head} />
          </tr>
        </thead>
        <tbody>
          {TAGS.map(([name, type, address], i) => (
            <tr key={name} className="h-6 nth-[5n]:h-[23px]">
              <td className={clsx(cell, 'bg-[#cacaca] pl-[5px] leading-5 text-[#868686]')}>{i + 1}</td>
              <td className={clsx(cell, 'bg-[#dcdcdc] pl-px')}>
                <TagIcon />
              </td>
              {i === ACTIVE_TAG ? (
                <td className="relative border border-[#3a66c4] bg-white p-0">
                  <input
                    aria-label="名称"
                    defaultValue={name}
                    className="block h-5 w-full bg-white pl-7 text-[15px] leading-5 outline-none"
                  />
                  <span className="absolute -right-0.5 -bottom-0.5 size-[5px] bg-[#3a66c4]" />
                </td>
              ) : (
                <td className={clsx('border-r border-b border-r-[#c4c4c4] border-b-white p-0 pl-[29px] leading-5', textSize(name))}>
                  {name}
                </td>
              )}
              <td className={clsx(cell, 'pl-[5px] leading-5')}>
                <div className="flex h-[22px] items-center justify-between">
                  {type}
                  {i === ACTIVE_TAG && (
                    <button
                      type="button"
                      aria-label="选择数据类型"
                      className="grid h-[22px] w-[21px] place-items-center border-2 border-[#9a9a9a] bg-[#dfe4f4]"
                    >
                      <Svg box="0 0 16 16" className="size-4">
                        <rect x="1.500" y="1" width="12" height="14" fill="#f5f7ff" stroke="#7c89c4" />
                        <path d="M4 4H5.500M7 4H12M4 6.500H5.500M7 6.500H12M4 9H5.500M7 9H12M4 11.500H5.500M7 11.500H12" stroke="#232c60" strokeWidth="1.300" />
                      </Svg>
                    </button>
                  )}
                </div>
              </td>
              <td className={clsx(cell, 'pl-[6px] leading-5')}>
                <div className="flex h-[22px] items-center justify-between">
                  {address}
                  {i === ACTIVE_TAG && (
                    <button
                      type="button"
                      aria-label="选择地址"
                      className="grid h-[22px] w-[22px] place-items-center border border-[#7a7a7a] bg-linear-to-b from-[#f0f0f0] to-[#cfcfcf]"
                    >
                      <Svg box="0 0 12 12" className="size-3">
                        <path d="M0 4H12L6 9Z" fill="#000" />
                      </Svg>
                    </button>
                  )}
                </div>
              </td>
              <td className={clsx(cell, 'bg-[#dedede] pl-[11px] leading-none')}>
                <CheckBox label={`${name} 保持`} state="off" />
              </td>
              {ACCESS_COLUMNS.map((title) => (
                <td key={title} className={clsx(cell, 'text-center leading-none')}>
                  <CheckBox label={`${name} ${title}`} state="on" />
                </td>
              ))}
              <td className={cell} />
              <td className={cell} />
            </tr>
          ))}
          <tr className="h-6">
            <td className={clsx(cell, 'bg-[#cacaca] pl-[5px] leading-5 text-[#868686]')}>{TAGS.length + 1}</td>
            <td className={cell} />
            <td className="border-r border-b border-r-[#c4c4c4] border-b-white p-0 pl-[29px] text-[15px] leading-5 text-[#999]">
              &lt;添加&gt;
            </td>
            <td className={cell} />
            <td className={cell} />
            <td className={clsx(cell, 'bg-[#dedede] pl-[11px] leading-none')}>
              <CheckBox label="添加 保持" state="off" />
            </td>
            {ACCESS_COLUMNS.map((title) => (
              <td key={title} className={clsx(cell, 'bg-[#dedede] text-center leading-none')}>
                <CheckBox label={`添加 ${title}`} state="preset" />
              </td>
            ))}
            <td className={cell} />
            <td className={cell} />
          </tr>
          {Array.from({ length: EMPTY_ROWS }, (_, i) => (
            <tr key={i} className="h-6 nth-[5n]:h-[23px]">
              <td className={clsx(cell, 'bg-[#cacaca]')} />
              <td className={cell} />
              <td className="border-r border-b border-r-[#c4c4c4] border-b-white p-0" />
              {[0, 1, 2, 3, 4, 5, 6, 7].map((col) => (
                <td key={col} className={cell} />
              ))}
            </tr>
          ))}
        </tbody>
      </table>
    </div>
  );
}

function InspectorTabs() {
  const tab = 'flex h-[27px] items-center border border-b-0 border-[#777] text-lg leading-6';
  const inactive = 'bg-linear-to-b from-[#d8d8d8] to-[#c6c6c6] font-medium text-[#555]';
  return (
    <footer className="relative flex h-8 shrink-0 items-end justify-end gap-0.5 bg-[#b0b0b0]">
      <button type="button" className={clsx(tab, inactive, 'w-[92px] gap-1 pl-[2px]')}>
        <Svg>
          <rect x="1.500" y="1.500" width="16" height="16" fill="url(#paper)" stroke="#8b97d4" />
          <path d="M3 5H8M3 8H6M3 11H6M3 14H8" stroke="#6673b4" />
          <circle cx="11" cy="9" r="4.500" fill="#dce9f8" stroke="#3c4860" strokeWidth="1.500" />
          <path d="M14.500 13 19 18.500" stroke="#3c4860" strokeWidth="2.800" />
        </Svg>
        属性
      </button>
      <button type="button" className={clsx(tab, 'w-[101px] gap-1 bg-[#ececec] pl-[3px] font-bold')}>
        <Svg>
          <rect x="3.500" y="1.500" width="13" height="17" fill="url(#paper)" stroke="#a7b1e0" />
          <path d="M0 2.500H5M2.500 0V5M5 2.500 3 5" stroke="#141a66" strokeWidth="1.800" />
          <path d="M8 8.500H10.500V15M7.500 15H13.500" stroke="#10145a" strokeWidth="2.200" />
          <circle cx="10.300" cy="5" r="1.600" fill="#10145a" />
          <path d="M14 17H20M17.500 14.500 20 17 17.500 19.500" stroke="#141a66" strokeWidth="1.800" />
        </Svg>
        信息
        <Svg className="mr-1 ml-auto size-[18px]">
          <path d="M6 1H14L19 6V14L14 19H6L1 14V6Z" fill="#f5c518" stroke="#b8860b" />
          <path d="M8 8.500H10.500V14M7.500 14.500H13" stroke="#2b2000" strokeWidth="2" />
          <circle cx="10.200" cy="5.500" r="1.500" fill="#2b2000" />
        </Svg>
      </button>
      <button type="button" className={clsx(tab, inactive, 'mr-[91px] w-[93px] gap-1 pl-[2px]')}>
        <Svg>
          <Stethoscope />
        </Svg>
        诊断
      </button>
      <div className="absolute top-2 right-1 flex items-center gap-2">
        <button type="button" aria-label="浮动窗口">
          <Svg box="0 0 16 16" className="size-4">
            <path d="M1 5H11V15H1Z" fill="#fff" />
            <path d="M5 2H14V11" stroke="#fff" strokeWidth="2" />
          </Svg>
        </button>
        <button type="button" aria-label="列表">
          <Svg box="0 0 16 16" className="size-4">
            <path d="M1 1.500H15M1 5.500H15M1 9.500H15M1 13.500H15" stroke="#d4d4d4" strokeWidth="2" />
          </Svg>
        </button>
        <button type="button" aria-label="展开">
          <Svg box="0 0 16 16" className="size-4">
            <path d="M0 11 8 3 16 11Z" fill="#fff" />
          </Svg>
        </button>
      </div>
      <span className="absolute right-[10px] bottom-0 text-base leading-5 whitespace-nowrap text-[#f2f2f2]/90 [text-shadow:1px_1px_1px_#555]">
        CSDN @Clockwisee
      </span>
    </footer>
  );
}

function Pointer() {
  return (
    <div className="pointer-events-none absolute top-[249px] left-[584px]">
      <Svg box="0 0 54 54" className="size-[54px]">
        <circle cx="27" cy="27" r="24" stroke="#f0b9bf" strokeOpacity="0.45" strokeWidth="4" />
        <path d="M20 26V42L24 38.500 27 45 30 43.500 27 37.500H32Z" fill="#fff" stroke="#222" strokeWidth="1.200" />
      </Svg>
    </div>
  );
}

export default function App() {
  return (
    <div className="relative flex h-screen flex-col overflow-hidden bg-[#d8d8d8] font-['Noto_Sans','Noto_Sans_CJK_SC',sans-serif] text-[#111]">
      <SharedDefs />
      <div className="h-0.5 shrink-0 border-b border-[#2b302e] bg-[#c4c8bf]" />
      <div className="flex min-h-0 flex-1">
        <div className="w-0.5 shrink-0 bg-[#dcdcdc]" />
        <SideStrip />
        <LeftPanel />
        <div className="w-[3px] shrink-0 bg-[#1f2333]" />
        <main className="flex min-w-0 flex-1 flex-col">
          <TitleBar />
          <EditorTabs />
          <EditorToolbar />
          <h2 className="h-[26px] shrink-0 bg-[#d6d6d6] pl-[31px] text-[19px] leading-[26px] font-bold">默认变量表</h2>
          <TagTable />
          <div className="h-[3px] shrink-0 bg-[#25263a]" />
          <InspectorTabs />
        </main>
        <div className="w-0.5 shrink-0 bg-[#2a2e3c]" />
        <div className="flex w-[3px] shrink-0 flex-col bg-[#dadada]">
          <span className="h-[38px] bg-[#a8a8a8]" />
          <span className="mt-[5px] h-4 bg-[#f0c070]" />
          <span className="mt-[70px] h-px bg-[#555]" />
          <span className="mt-2 h-3 bg-[#9a9ac8]" />
        </div>
      </div>
      <div className="flex h-[6px] shrink-0 items-end bg-[#1a1a1a] pl-[229px]">
        <span className="h-px w-[141px] bg-[#b9b9b9]" />
        <span className="ml-[3px] h-px w-[142px] bg-[#b9b9b9]" />
        <span className="ml-[3px] h-px w-[142px] bg-[#e4e4e4]" />
        <span className="ml-[496px] h-px w-[24px] bg-[#a8a8a8]" />
      </div>
      <Svg box="0 0 104 5" className="pointer-events-none absolute top-0 left-[218px] h-[5px] w-[104px]">
        <path d="M1 0H25L16 3 2 4ZM72 0H93L84 3 73 4Z" fill="#e6e6e2" />
      </Svg>
      <Pointer />
    </div>
  );
}
